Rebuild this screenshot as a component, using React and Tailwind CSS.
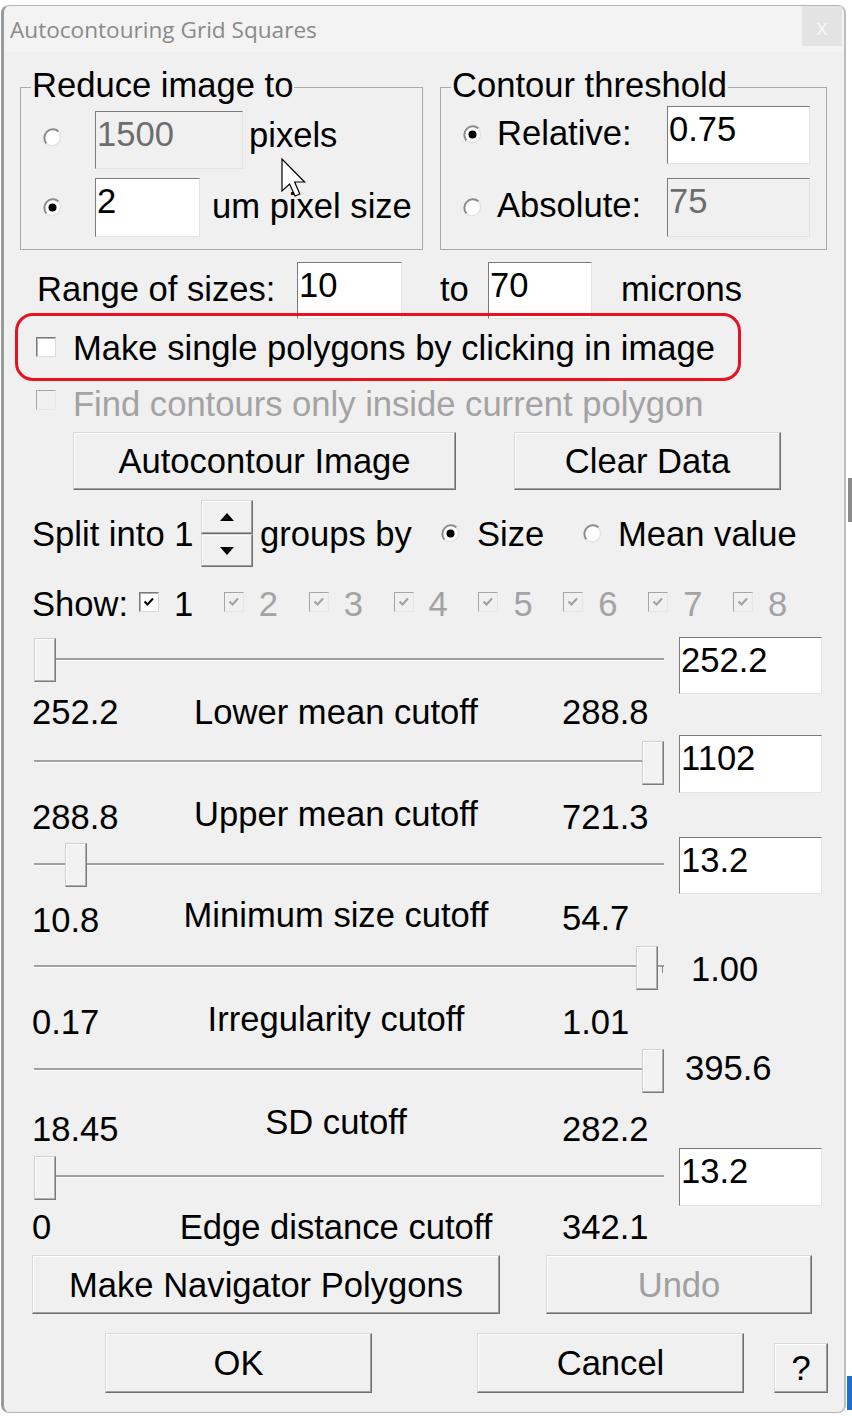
import React from "react";

const F = "font-['Liberation_Sans',Arial,sans-serif]";

const Radio = ({ on, cls = "" }) => (
  <svg width="19" height="19" viewBox="0 0 19 19" className={`shrink-0 ${cls}`}>
    <circle cx="9.5" cy="9.5" r="8.5" fill="#ffffff" />
    <path d="M3.5 15.5 A8.5 8.5 0 0 1 15.5 3.5" stroke="#8a8a8a" strokeWidth="2" fill="none" />
    <path d="M15.5 3.5 A8.5 8.5 0 0 1 3.5 15.5" stroke="#e3e3e3" strokeWidth="1.5" fill="none" />
    {on && <circle cx="9.5" cy="9.5" r="4" fill="#000000" />}
  </svg>
);

const Check = ({ on, dis, cls = "" }) => (
  <div
    className={`shrink-0 w-[20px] h-[20px] border flex items-center justify-center ${
      dis
        ? "bg-[#f0f0f0] border-t-[#a6a6a6] border-l-[#a6a6a6] border-r-[#e6e6e6] border-b-[#e6e6e6]"
        : "bg-white border-t-[#7a7a7a] border-l-[#7a7a7a] border-r-[#dcdcdc] border-b-[#dcdcdc] shadow-[inset_1px_1px_0_#b4b4b4]"
    } ${cls}`}
  >
    {on && (
      <svg width="14" height="14" viewBox="0 0 14 14">
        <path d="M2.5 6.5 L5.5 9.5 L11 3.5" stroke={dis ? "#a0a0a0" : "#000000"} strokeWidth="2" fill="none" />
      </svg>
    )}
  </div>
);

const TBox = ({ v, dis, cls = "" }) => (
  <div
    className={`shrink-0 border border-t-[#7a7a7a] border-l-[#7a7a7a] border-r-[#e3e3e3] border-b-[#e3e3e3] pl-[1px] pt-[5px] leading-[34px] ${
      dis ? "bg-[#f0f0f0] text-[#6d6d6d]" : "bg-white text-black"
    } ${cls}`}
  >
    {v}
  </div>
);

const Btn = ({ children, dis, cls = "" }) => (
  <div
    className={`shrink-0 flex items-center justify-center bg-[#f0f0f0] border border-t-[#d9d9d9] border-l-[#d9d9d9] border-r-[#6e6e6e] border-b-[#6e6e6e] shadow-[inset_-1px_-1px_0_#a0a0a0,inset_1px_1px_0_#ffffff] leading-[34px] ${
      dis ? "text-[#a0a0a0]" : "text-black"
    } ${cls}`}
  >
    {children}
  </div>
);

const Thumb = ({ cls }) => (
  <div
    className={`absolute w-[22px] h-[44px] bg-[#f2f2f2] border border-t-[#d0d0d0] border-l-[#d0d0d0] border-r-[#7a7a7a] border-b-[#7a7a7a] shadow-[inset_-1px_-1px_0_#b0b0b0,inset_1px_1px_0_#ffffff] ${cls}`}
  />
);

const Slider = ({ cls, trackCls, thumbCls, tick, children }) => (
  <div className={`flex items-start shrink-0 ${cls}`}>
    <div className="relative ml-[30px] w-[630px] h-full shrink-0">
      <div className={`h-[2px] bg-[#a0a0a0] shadow-[0_1px_0_#ffffff] ${trackCls}`} />
      {tick && <div className="absolute right-[1px] top-[20px] w-[1px] h-[7px] bg-[#8a8a8a]" />}
      <Thumb cls={thumbCls} />
    </div>
    {children}
  </div>
);

const Labels = ({ cls, a, b, c, am = "", cm = "" }) => (
  <div className={`flex items-start shrink-0 whitespace-nowrap ${cls}`}>
    <span className={`ml-[28px] w-[140px] shrink-0 ${am}`}>{a}</span>
    <span className="w-[328px] shrink-0 text-center">{b}</span>
    <span className={`ml-[62px] ${cm}`}>{c}</span>
  </div>
);

const Group = ({ label, cls, children }) => (
  <div className={`relative shrink-0 border border-[#a9a9a9] ${cls}`}>
    <span className="absolute top-[-20px] left-[10px] px-[1px] bg-[#f0f0f0] leading-[34px] whitespace-nowrap">
      {label}
    </span>
    {children}
  </div>
);

const Spinner = () => (
  <div className="shrink-0 w-[52px] h-[67px] flex flex-col">
    <Btn cls="h-[34px] w-full">
      <svg width="14" height="8" viewBox="0 0 14 8">
        <path d="M7 0 L14 8 L0 8 Z" fill="#000000" />
      </svg>
    </Btn>
    <Btn cls="h-[33px] w-full">
      <svg width="14" height="8" viewBox="0 0 14 8">
        <path d="M0 0 L14 0 L7 8 Z" fill="#000000" />
      </svg>
    </Btn>
  </div>
);

export default function App() {
  const groups = ["2", "3", "4", "5", "6", "7", "8"];
  return (
    <div className={`${F} w-[852px] h-[1416px] bg-white relative overflow-hidden text-[34.6px] leading-[34px] text-black`}>
      {/* background window peeking out on the right */}
      <div className="absolute right-0 top-[478px] w-[4px] h-[44px] bg-[#8a8a8a]" />
      <div className="absolute right-0 top-[1376px] w-[5px] h-[34px] bg-[#1c6fd1]" />

      <div className="pt-[5px] pl-[1px]">
        <div className="relative w-[845px] h-[1408px] bg-[#f0f0f0] border-t border-b border-[#b5b5b5] border-l-[3px] border-l-[#9a9a9a] border-r-2 border-r-[#bdbdbd] rounded-[8px] flex flex-col">
          {/* title bar */}
          <div className="h-[46px] shrink-0 flex items-start justify-between bg-[#f3f3f3] rounded-t-[8px]">
            <span className="pl-[6px] mt-[11px] font-['Open_Sans',sans-serif] text-[22.6px] leading-[26px] text-[#8a8a8a] whitespace-nowrap">
              Autocontouring Grid Squares
            </span>
            <div className="w-[40px] h-[40px] mr-[2px] bg-[#e3e3e3] flex items-center justify-center text-[22px] leading-[22px] text-[#f7f7f7] font-['Open_Sans',sans-serif]">
              x
            </div>
          </div>

          {/* group boxes */}
          <div className="flex items-start shrink-0 mt-[35px] h-[163px]">
            <Group label="Reduce image to" cls="ml-[16px] w-[403px] h-[163px]">
              <div className="flex items-start mt-[23px] h-[58px]">
                <Radio cls="ml-[22px] mt-[17px]" />
                <TBox v="1500" dis cls="ml-[33px] w-[148px] h-[58px]" />
                <span className="ml-[6px] mt-[7px]">pixels</span>
              </div>
              <div className="flex items-start mt-[9px] h-[59px]">
                <Radio on cls="ml-[22px] mt-[20px]" />
                <TBox v="2" cls="ml-[33px] w-[105px] h-[59px]" />
                <span className="ml-[12px] mt-[11px] whitespace-nowrap">um pixel size</span>
              </div>
            </Group>
            <Group label="Contour threshold" cls="ml-[17px] w-[387px] h-[163px]">
              <div className="flex items-start mt-[18px] h-[58px]">
                <Radio on cls="ml-[22px] mt-[19px]" />
                <span className="ml-[15px] mt-[10px] w-[170px] shrink-0">Relative:</span>
                <TBox v="0.75" cls="w-[143px] h-[58px]" />
              </div>
              <div className="flex items-start mt-[14px] h-[59px]">
                <Radio cls="ml-[22px] mt-[20px]" />
                <span className="ml-[15px] mt-[10px] w-[170px] shrink-0">Absolute:</span>
                <TBox v="75" dis cls="w-[143px] h-[59px]" />
              </div>
            </Group>
          </div>

          {/* range of sizes */}
          <div className="flex items-start shrink-0 mt-[12px] h-[57px] whitespace-nowrap">
            <span className="ml-[33px] mt-[10px] w-[260px] shrink-0">Range of sizes:</span>
            <TBox v="10" cls="w-[105px] h-[57px]" />
            <span className="ml-[38px] mt-[10px] w-[48px] shrink-0">to</span>
            <TBox v="70" cls="w-[104px] h-[57px]" />
            <span className="ml-[29px] mt-[10px]">microns</span>
          </div>

          {/* checkboxes */}
          <div className="flex items-start shrink-0 mt-[12px] h-[34px] whitespace-nowrap">
            <Check cls="ml-[32px] mt-[6px]" />
            <span className="ml-[17px]">Make single polygons by clicking in image</span>
          </div>
          <div className="flex items-start shrink-0 mt-[22px] h-[34px] whitespace-nowrap text-[#a3a3a3]">
            <Check dis cls="ml-[32px] mt-[3px]" />
            <span className="ml-[17px]">Find contours only inside current polygon</span>
          </div>

          {/* action buttons */}
          <div className="flex items-start shrink-0 mt-[11px] h-[58px] whitespace-nowrap">
            <Btn cls="ml-[69px] w-[383px] h-[58px]">Autocontour Image</Btn>
            <Btn cls="ml-[58px] w-[267px] h-[58px]">Clear Data</Btn>
          </div>

          {/* split into groups */}
          <div className="flex items-start shrink-0 mt-[10px] h-[67px] whitespace-nowrap">
            <span className="ml-[28px] mt-[17px] w-[169px] shrink-0">Split into 1</span>
            <Spinner />
            <span className="ml-[7px] mt-[17px] w-[181px] shrink-0">groups by</span>
            <Radio on cls="mt-[24px]" />
            <span className="ml-[17px] mt-[17px] w-[106px] shrink-0">Size</span>
            <Radio cls="mt-[24px]" />
            <span className="ml-[16px] mt-[17px]">Mean value</span>
          </div>

          {/* show */}
          <div className="flex items-start shrink-0 mt-[20px] h-[34px] whitespace-nowrap">
            <span className="ml-[28px] w-[107px] shrink-0">Show:</span>
            <div className="grid grid-cols-[repeat(8,84.86px)]">
              <div className="flex items-start">
                <Check on cls="mt-[5px]" />
                <span className="ml-[15px]">1</span>
              </div>
              {groups.map((g) => (
                <div key={g} className="flex items-start text-[#a3a3a3]">
                  <Check on dis cls="mt-[5px]" />
                  <span className="ml-[15px]">{g}</span>
                </div>
              ))}
            </div>
          </div>

          {/* sliders */}
          <Slider cls="mt-[16px] h-[57px]" trackCls="mt-[21px]" thumbCls="top-[1px] left-0">
            <TBox v="252.2" cls="ml-[15px] w-[143px] h-[57px]" />
          </Slider>
          <Labels cls="mt-[1px] h-[34px]" a="252.2" b="Lower mean cutoff" c="288.8" />

          <Slider cls="mt-[6px] h-[58px]" trackCls="mt-[25px]" thumbCls="top-[6px] left-[608px]">
            <TBox v="1102" cls="ml-[15px] w-[143px] h-[58px]" />
          </Slider>
          <Labels cls="mt-[4px] h-[37px]" a="288.8" b="Upper mean cutoff" c="721.3" am="mt-[3px]" cm="mt-[3px]" />

          <Slider cls="mt-[3px] h-[57px]" trackCls="mt-[26px]" thumbCls="top-[6px] left-[31px]">
            <TBox v="13.2" cls="ml-[15px] w-[143px] h-[57px]" />
          </Slider>
          <Labels cls="mt-[4px] h-[39px]" a="10.8" b="Minimum size cutoff" c="54.7" am="mt-[5px]" cm="mt-[3px]" />

          <Slider cls="mt-[9px] h-[44px]" trackCls="mt-[19px]" thumbCls="top-0 left-[602px]" tick>
            <span className="ml-[27px] mt-[6px]">1.00</span>
          </Slider>
          <Labels cls="mt-[12px] h-[37px]" a="0.17" b="Irregularity cutoff" c="1.01" am="mt-[3px]" cm="mt-[3px]" />

          <Slider cls="mt-[10px] h-[44px]" trackCls="mt-[19px]" thumbCls="top-0 left-[608px]">
            <span className="ml-[21px] mt-[2px]">395.6</span>
          </Slider>
          <Labels cls="mt-[12px] h-[41px]" a="18.45" b="SD cutoff" c="282.2" am="mt-[7px]" cm="mt-[7px]" />

          <Slider cls="mt-[2px] h-[58px]" trackCls="mt-[27px]" thumbCls="top-[8px] left-0">
            <TBox v="13.2" cls="ml-[15px] w-[143px] h-[58px]" />
          </Slider>
          <Labels cls="mt-[4px] h-[34px]" a="0" b="Edge distance cutoff" c="342.1" />

          {/* bottom buttons */}
          <div className="flex items-start shrink-0 mt-[11px] h-[59px] whitespace-nowrap">
            <Btn cls="ml-[28px] w-[468px] h-[59px]">Make Navigator Polygons</Btn>
            <Btn dis cls="ml-[46px] w-[266px] h-[59px]">Undo</Btn>
          </div>
          <div className="flex items-start shrink-0 mt-[19px] h-[60px] whitespace-nowrap">
            <Btn cls="ml-[101px] w-[267px] h-[60px]">OK</Btn>
            <Btn cls="ml-[105px] w-[267px] h-[60px]">Cancel</Btn>
            <Btn cls="ml-[30px] mt-[10px] w-[54px] h-[50px]">?</Btn>
          </div>

          {/* red highlight around the checkbox row */}
          <div className="absolute left-[11px] top-[307px] w-[726px] h-[68px] border-[3px] border-[#e81123] rounded-[18px] pointer-events-none" />

          {/* mouse pointer */}
          <svg className="absolute left-[277px] top-[152px]" width="26" height="40" viewBox="0 0 13 20">
            <path
              d="M0.5 0.5 L0.5 16.5 L4.3 13 L7 19 L9.4 18 L6.8 12 L11.8 12 Z"
              fill="#ffffff"
              stroke="#000000"
              strokeWidth="0.6"
              strokeLinejoin="miter"
            />
          </svg>
        </div>
      </div>
    </div>
  );
}
